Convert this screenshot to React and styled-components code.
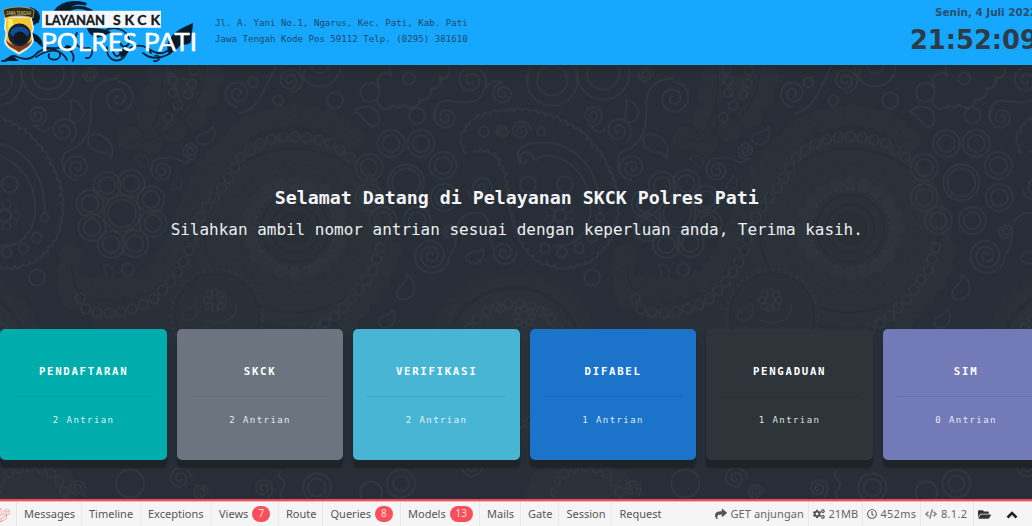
import React from "react";
import styled, { createGlobalStyle } from "styled-components";
import { FaShare, FaCogs, FaRegClock, FaCode, FaFolderOpen, FaLaravel } from "react-icons/fa";

const GlobalStyle = createGlobalStyle`
  * { box-sizing: border-box; }
  html, body { margin: 0; padding: 0; overflow: hidden; }
  body { font-family: "DejaVu Sans Mono", "Liberation Mono", monospace; }
`;

const Page = styled.div`
  width: 100vw;
  height: 100vh;
  display: flex;
  flex-direction: column;
  overflow: hidden;
  background: #272e36;
`;

const Header = styled.header`
  height: 64.5px;
  flex: none;
  display: flex;
  background: #16a7ff;
  color: #2d3c4a;
`;

const LogoArt = styled.svg`
  width: 215px;
  height: 64px;
  flex: none;
  display: block;
`;

const Address = styled.address`
  flex: 1;
  padding-top: 15px;
  font-style: normal;
  font-size: 9.14px;
  line-height: 16px;
  color: #20486a;
  white-space: pre-line;
`;

const Clock = styled.div`
  flex: none;
  width: 122px;
  font-family: "DejaVu Sans", sans-serif;
  font-weight: 700;
  white-space: nowrap;
  color: #2f3b46;
`;

const ClockDate = styled.div`
  padding: 5px 0 0 25px;
  font-size: 10.4px;
  line-height: 14px;
  color: #27506f;
`;

const ClockTime = styled.div`
  font-size: 25.7px;
  line-height: 30px;
  margin-top: 5.5px;
`;

const Hero = styled.main`
  position: relative;
  flex: 1;
  min-height: 0;
  display: flex;
  flex-direction: column;
  overflow: hidden;
`;

const Backdrop = styled.svg`
  position: absolute;
  inset: 0;
  width: 100%;
  height: 100%;
`;

const Welcome = styled.section`
  position: relative;
  height: 264.5px;
  flex: none;
  padding: 117.5px 0 0 1.5px;
  text-align: center;
  color: #f5f6f7;
  white-space: nowrap;
`;

const Title = styled.h1`
  margin: 0;
  font-size: 18.27px;
  line-height: 32px;
  font-weight: 700;
`;

const Lead = styled.p`
  margin: 0;
  font-size: 15.97px;
  line-height: 32px;
  color: #eceeef;
`;

const Cards = styled.section`
  position: relative;
  display: flex;
  gap: 9.8px;
  padding-left: 0.3px;
`;

const Card = styled.article`
  flex: none;
  width: 166.7px;
  height: 131px;
  padding: 35px 14px 0;
  border-radius: 5px;
  background: ${(p) => p.$color};
  box-shadow: 0 8px 2px rgba(29, 33, 38, 0.85);
  color: #fff;
  text-align: center;
`;

const CardTitle = styled.h2`
  margin: 0;
  font-size: 10.7px;
  line-height: 16px;
  letter-spacing: 1.7px;
`;

const Divider = styled.hr`
  margin: 16px 0 15px;
  border: 0;
  border-top: 1px solid rgba(0, 0, 0, 0.08);
`;

const Count = styled.p`
  margin: 0;
  font-size: 9px;
  line-height: 16px;
  letter-spacing: 1.42px;
  color: rgba(255, 255, 255, 0.88);
`;

const DebugBar = styled.footer`
  flex: none;
  height: 27px;
  display: flex;
  justify-content: space-between;
  border-top: 2px solid #ef4b5b;
  box-shadow: inset 0 1px 0 #f6b5bb;
  background: #f5f5f5;
  font-family: "Noto Sans", sans-serif;
  font-size: 11px;
  line-height: 26px;
  color: #555;
  white-space: nowrap;
`;

const BarGroup = styled.div`
  display: flex;
  padding-top: 1px;
`;

const BrandMark = styled.div`
  width: 16.5px;
  display: flex;
  align-items: center;
  justify-content: flex-end;
  padding: 1px 6px 0 0;
  overflow: hidden;
  color: #f0776f;
  border-right: 1px solid #e6e6e6;
  svg { flex: none; }
`;

const Tab = styled.div`
  width: ${(p) => p.$width}px;
  padding-left: 7.5px;
  display: flex;
  align-items: center;
  gap: 4px;
  border-right: 1px solid ${(p) => (p.$last ? "transparent" : "#e8e8e8")};
  svg { flex: none; color: #555; }
`;

const TabText = styled.span`
  letter-spacing: ${(p) => p.$spacing || 0}px;
`;

const Badge = styled.span`
  width: ${(p) => p.$width}px;
  height: 16px;
  flex: none;
  border-radius: 8px;
  background: #f94f5c;
  color: #ffdcdc;
  font-size: 10px;
  line-height: 15px;
  text-align: center;
`;

const Indicator = styled.div`
  width: ${(p) => p.$width}px;
  padding-left: 4px;
  display: flex;
  align-items: center;
  gap: 4px;
  color: #666;
  border-right: 1px solid ${(p) => (p.$last ? "transparent" : "#e8e8e8")};
  svg { flex: none; color: ${(p) => p.$icon || "#555"}; }
`;

/* Archimedean curl, from its centre outwards */
const curl = (cx, cy, r, turns = 2, start = 0, dir = 1) => {
  let d = "";
  const steps = 18 * turns;
  for (let i = 0; i <= steps; i++) {
    const a = start + (dir * i * Math.PI) / 9;
    const q = 1.5 + ((r - 1.5) * i) / steps;
    d += `${i ? "L" : "M"}${(cx + q * Math.cos(a)).toFixed(1)} ${(cy + q * Math.sin(a)).toFixed(1)}`;
  }
  return d;
};

/* Evenly spaced points along a polyline */
const walk = (pts, gap) => {
  const out = [pts[0]];
  let left = gap;
  for (let i = 1; i < pts.length; i++) {
    let [x, y] = pts[i - 1];
    const [ex, ey] = pts[i];
    let len = Math.hypot(ex - x, ey - y);
    while (len >= left) {
      x += ((ex - x) * left) / len;
      y += ((ey - y) * left) / len;
      out.push([x, y]);
      len = Math.hypot(ex - x, ey - y);
      left = gap;
    }
    left -= len;
  }
  return out;
};

const scallop = (pts, gap = 8) =>
  walk(pts, gap)
    .map(([x, y], i) => (i ? `A${gap * 0.55} ${gap * 0.55} 0 0 1 ${x.toFixed(1)} ${y.toFixed(1)}` : `M${x} ${y}`))
    .join("");

const ringPoints = (cx, cy, rx, ry, n) =>
  Array.from({ length: n }, (_, i) => {
    const a = (i * 2 * Math.PI) / n;
    return [cx + rx * Math.cos(a), cy + ry * Math.sin(a)];
  });

const Dots = ({ pts, r, ...rest }) => (
  <g {...rest}>
    {pts.map(([x, y], i) => (
      <circle key={i} cx={x} cy={y} r={r} />
    ))}
  </g>
);

const Blossom = ({ cx, cy, petals }) => (
  <g>
    <circle cx={cx} cy={cy} r="18" />
    <circle cx={cx} cy={cy} r="14" />
    {petals.map(([x, y], i) => (
      <g key={i}>
        <circle cx={x} cy={y} r="13.5" />
        <circle cx={x} cy={y} r="8.5" />
      </g>
    ))}
  </g>
);

const drop = (x, y, s = 1, a = 0) => ({
  d: "M-12 -3C-8 -10 6 -10 10 -3C14 6 10 12 4 10C-3 8 -3 -2 -12 -3Z",
  transform: `translate(${x} ${y}) rotate(${a}) scale(${s})`,
});

const curls = [
  [90, 75, 8, 2, 0, 1], [118, 98, 17, 2, -1.6, -1], [63, 130, 14, 2, 1, 1], [37, 115, 11, 2, 2, 1],
  [77, 167, 13, 2, 3, -1], [191, 150, 9, 2, 1, -1], [162, 170, 11, 2, 3.6, 1], [238, 93, 14, 2, 1.6, -1],
  [290, 80, 12, 2, 0, 1], [471, 80, 15, 2, 0, 1], [446, 117, 12, 2, 4, 1], [503, 93, 11, 2, 4.5, 1],
  [431, 255, 19, 3, 0, -1], [504, 252, 13, 2, 0, -1], [450, 232, 8, 2, 0, 1], [481, 187, 14, 2, 3, 1],
  [521, 130, 10, 2, 0, 1], [502, 130, 7, 2, 0, -1], [525, 159, 9, 1, 0, 1],
  [263, 488, 10, 2, 1, 1], [77, 488, 9, 2, 1, 1], [471, 465, 12, 2, 0, -1], [180, 478, 12, 2, 0, 1], [200, 492, 8, 2, 0, 1],
];

const links = [
  "M118 78C98 78 90 90 91 108C92 132 84 146 67 151C58 157 62 178 77 180",
  "M37 126C41 134 49 132 50 126",
  "M191 159C183 168 176 152 165 158C157 156 150 162 151 171",
  "M238 113C258 112 264 88 276 66",
  "M290 92C304 91 303 76 305 68",
  "M486 80C484 108 464 102 446 100C436 102 432 110 434 120",
  "M486 88C490 80 496 80 503 82",
  "M450 254C463 241 448 219 470 213C496 208 487 234 493 249",
  "M282 470C272 476 290 480 283 488C276 496 286 498 284 506",
];

const chain = [
  [80, 298], [86, 309], [102, 313], [125, 311], [150, 302], [168, 285], [180, 268], [188, 253], [195, 228],
  [205, 208], [225, 184], [240, 158], [258, 144], [276, 137], [295, 136], [314, 138], [331, 143], [351, 157],
];
const chainTail = [[380, 247], [373, 270], [355, 295], [333, 317], [310, 332]];
const fringe = [
  [70, 255], [66, 280], [72, 300], [86, 285], [110, 289], [140, 285], [160, 270], [175, 242], [190, 205], [205, 170],
  [228, 145], [250, 125], [275, 117], [300, 114], [330, 121], [352, 137], [365, 150],
];

const paisley = [
  [467, 153], [462, 138], [472, 120], [494, 112], [524, 110], [554, 117], [581, 132], [601, 155],
  [614, 183], [617, 210], [611, 237], [591, 260], [564, 267], [537, 260], [521, 240], [511, 207],
  [507, 173], [497, 153], [481, 147], [467, 153],
];

const TILE = 555.3;

const Motifs = () => (
  <g fill="none" stroke="#333941" strokeWidth="1.4">
    <g fill="#2b3139" stroke="none">
      <ellipse cx="292" cy="230" rx="100" ry="96" />
      <path d="M70 270C85 318 150 315 190 250L245 315L100 340Z" opacity=".55" />
      <Dots pts={walk(fringe, 16)} r="11" />
      <Dots pts={walk([[385, 235], [394, 255], [378, 285], [358, 310], [340, 330]], 17)} r="10" />
      <Dots pts={[[130, 138], [150, 142], [174, 130], [195, 115], [207, 95], [212, 76], [149, 118], [155, 95], [160, 75], [184, 88]]} r="12" />
      <circle cx="30" cy="498" r="48" />
      <circle cx="575" cy="498" r="48" />
      <Dots pts={ringPoints(295, 228, 47, 45, 20)} r="7" fill="#2e343c" />
    </g>
    {[0, -TILE].map((dx) => (
      <g key={dx} transform={`translate(${dx} 0)`}>
        <Dots pts={ringPoints(514, 355, 80, 80, 36)} r="7" fill="#2a3038" stroke="none" />
        <circle cx="514" cy="355" r="78" fill="#2b3139" stroke="none" />
        <circle cx="514" cy="355" r="68" stroke="#272d35" strokeWidth="4" />
        <Dots pts={ringPoints(514, 363, 55, 60, 30)} r="4.5" />
        <Dots pts={ringPoints(524, 316, 8, 8, 8)} r="3" />
        <circle cx="501" cy="308" r="4" />
        <circle cx="546" cy="312" r="4" />
      </g>
    ))}
    <g stroke="#262c34" strokeWidth="1.5">
      <ellipse cx="294" cy="230" rx="90" ry="82" />
      <circle cx="295" cy="228" r="34" />
      <circle cx="295" cy="228" r="24" />
      <circle cx="295" cy="228" r="16" fill="#292f36" />
      <circle cx="217" cy="315" r="42" fill="#293037" />
      <path d="M72 263C70 330 164 321 193 245M130 142C160 133 164 103 162 65M140 142C180 132 205 102 205 65" />
    </g>
    <g stroke="#272d35" strokeWidth="1.2">
      <Dots pts={walk(fringe, 12)} r=".7" />
      <Dots pts={ringPoints(295, 228, 67, 64, 36)} r=".8" />
      <Dots pts={ringPoints(295, 228, 58, 56, 30)} r=".6" />
    </g>
    <Dots pts={walk(chain, 12)} r="4.8" />
    <Dots pts={walk(chainTail, 12)} r="4.8" />
    <Dots pts={[[173, 80], [192, 83], [173, 92], [188, 94], [178, 105], [168, 117], [171, 69], [194, 70]]} r="4.5" />
    <g strokeWidth=".8" opacity=".8">
      <Dots pts={ringPoints(217, 315, 46, 46, 44)} r="1" />
      <Dots pts={ringPoints(295, 228, 40, 40, 42)} r="1" />
    </g>
    <g strokeWidth="1.1">
      <Dots pts={ringPoints(215, 300, 8, 8, 8)} r="3.5" />
      <path {...drop(191, 311, 0.8, 100)} />
      <path d="M205 320C225 326 237 318 236 304" />
    </g>
    {curls.map((c, i) => <path key={i} d={curl(...c)} />)}
    {links.map((d) => <path key={d} d={d} />)}
    <Blossom cx={122} cy={213} petals={[[107, 185], [131, 183], [151, 199], [153, 223], [135, 243], [111, 244], [92, 227], [90, 203]]} />
    <Blossom cx={406} cy={182} petals={[[391, 143], [421, 143], [443, 165], [444, 197], [417, 220], [383, 220], [369, 197], [369, 167]]} />
    <g>
      <circle cx="48" cy="73" r="26" /><circle cx="48" cy="73" r="16" />
      <circle cx="-3" cy="80" r="25" /><circle cx="-3" cy="80" r="15" />
      <circle cx="552" cy="80" r="25" /><circle cx="552" cy="80" r="15" />
      <circle cx="320" cy="66" r="20" /><circle cx="320" cy="64" r="9" />
      <circle cx="253" cy="82" r="5" /><circle cx="278" cy="100" r="5" />
      <circle cx="335" cy="100" r="8" /><circle cx="417" cy="115" r="8" />
      <circle cx="370" cy="92" r="9.5" /><circle cx="409" cy="78" r="6" />
      <circle cx="37" cy="277" r="8" /><circle cx="128" cy="269" r="6" /><path {...drop(108, 270, 0.6, 30)} />
      <circle cx="317" cy="487" r="14" /><circle cx="317" cy="487" r="9" />
      <circle cx="401" cy="483" r="14" /><circle cx="401" cy="483" r="8" />
      <circle cx="371" cy="492" r="11" /><circle cx="130" cy="483" r="14" />
    </g>
    <path strokeWidth="1.7" d="M448 66A7 7 0 0 1 440 77A8 8 0 0 1 431 88A9 9 0 0 1 420 99A9 9 0 0 1 404 104A8 8 0 0 1 393 105A9 9 0 0 1 377 99M380 87A8 8 0 0 1 392 75A11 11 0 0 1 394 60" />
    {[0, -TILE].map((dx) => (
      <g key={dx} transform={`translate(${dx} 0)`}>
        <path d={scallop(paisley)} />
        <path d="M520 164C511 146 529 141 546 142C583 145 601 177 600 213" />
        <circle cx="600" cy="217" r="4" />
        <path d="M536 160C550 146 581 164 588 190C597 224 580 249 553 245" />
        <circle cx="565" cy="184" r="8" /><circle cx="528" cy="184" r="8" />
        <circle cx="484" cy="131" r="5" /><circle cx="541" cy="131" r="4" />
        <Dots pts={ringPoints(560, 215, 11, 11, 9)} r="4" strokeWidth="1" opacity=".7" />
        <circle cx="560" cy="215" r="6" />
        <Dots pts={[[545, 248], [562, 252], [579, 248], [592, 237]]} r="5" />
      </g>
    ))}
    <path {...drop(75, 110, 0.9, 50)} />
    <path d="M88 140C88 132 98 132 105 137C111 141 115 149 111 158C109 149 102 154 95 150C90 147 87 144 88 140Z" />
    <path {...drop(207, 135, 0.85, 110)} />
    <path {...drop(367, 115, 1.05, 0)} />
    <path {...drop(406, 287, 1, 80)} />
    <path {...drop(476, 255, 0.8, 120)} />
    <path {...drop(388, 318, 0.8, 100)} />
    <path {...drop(141, 160, 0.6, 0)} />
    <path {...drop(177, 182, 0.6, 80)} />
    <Dots pts={ringPoints(30, 502, 36, 36, 20)} r="4.5" />
    <Dots pts={ringPoints(584, 502, 30, 36, 20)} r="4.5" />
  </g>
);

const PaisleyBackdrop = () => (
  <Backdrop viewBox="0 64.5 1032 434.5" preserveAspectRatio="none" aria-hidden="true">
    <defs>
      <pattern id="paisley" x="0" y="0" width={TILE} height="560" patternUnits="userSpaceOnUse">
        <Motifs />
      </pattern>
      <linearGradient id="edge" x1="0" y1="0" x2="0" y2="1">
        <stop offset="0" stopColor="#20252b" />
        <stop offset="1" stopColor="#20252b" stopOpacity="0" />
      </linearGradient>
    </defs>
    <rect y="64" width="1032" height="436" fill="#272e37" />
    <rect y="64" width="1032" height="436" fill="url(#paisley)" />
    <rect y="64" width="1032" height="12" fill="url(#edge)" opacity=".6" />
  </Backdrop>
);

const Logo = () => (
  <LogoArt viewBox="0 0 215 64" role="img" aria-label="Layanan SKCK Polres Pati">
    <g fill="none" stroke="#0b2238" strokeLinecap="round">
      <path strokeWidth="3.2" d="M33 24C41 20 40 12 31 9M55 12C61 3 72 1 85 4M66 12C75 5 84 7 91 11" />
      <path strokeWidth="1.8" d="M2 61C12 62 9 55 15 56C21 59 28 61 34 56C44 44 62 49 60 56C58 62 46 60 49 54M36 39C39 46 47 49 57 48C67 46 76 52 73 61M36 57C49 48 61 48 67 60" />
      <path strokeWidth="1.8" d="M105 31C112 25 127 29 129 39C130 48 121 49 120 42M107 47C106 63 122 64 126 54C130 43 147 43 151 53M113 51C115 60 122 55 120 51M77 33C72 43 78 50 89 48C95 51 91 59 86 58" />
      <path strokeWidth="1.8" d="M143 53C153 62 171 57 174 47C178 38 188 36 192 26M149 49C160 57 169 53 174 43M154 61C161 62 160 54 155 56" />
    </g>
    <g fill="#071b2c">
      <path d="M57 13C60 4 77 -2 87 4C75 3 70 7 68 13ZM87 28C97 28 108 29 112 33C106 33 102 39 95 37C90 35 88 32 87 28ZM167 46C170 33 181 28 193 23L191 42C187 47 181 42 178 48L169 55Z" />
      <path d="M31 11C38 13 40 18 39 23L32 21ZM32 33C38 34 42 39 43 45L34 41ZM66 45C71 45 74 48 72 52L64 49ZM119 51C123 47 129 49 127 54L121 58Z" />
      <path d="M2 61L12 55L19 61Z" />
    </g>
    <rect x="42" y="10.8" width="119" height="17" fill="#f4f8fb" />
    <g fontFamily="Lato, sans-serif">
      <text x="45" y="24.6" fontSize="14" fontWeight="700" fill="#16191d" stroke="#16191d" strokeWidth=".35" textLength="60" lengthAdjust="spacingAndGlyphs">LAYANAN</text>
      <text x="113" y="24.6" fontSize="14" fontWeight="700" fill="#16191d" stroke="#16191d" strokeWidth=".35" textLength="47">SKCK</text>
      <text x="41" y="50.8" fontSize="25.5" fontWeight="400" fill="#fff" stroke="#fff" strokeWidth=".5" textLength="156" lengthAdjust="spacingAndGlyphs">POLRES PATI</text>
    </g>
    <path d="M5 17L31 17C31 23 34 25 33 30C30 33 33 36 33 41C30 49 24 50 19 54C14 50 7 49 5 42C5 37 8 34 5 29C4 25 7 22 5 17Z" fill="#f3c72e" stroke="#e9edf0" strokeWidth="1.6" />
    <path d="M6 40C8 48 14 48 19 52C24 48 30 48 32 40C27 46 13 48 6 40Z" fill="#7b3a26" />
    <path d="M8 19H13V38C10 38 8 32 8 19Z" fill="#fae85e" />
    <circle cx="19.5" cy="34.8" r="11.4" fill="#16213a" />
    <path d="M9.5 33A11 11 0 0 1 29.5 33C25 40 14 40 9.5 33Z" fill="#124d92" />
    <circle cx="20" cy="38" r="6.5" fill="#131722" />
    <path d="M3 10C11 6 26 6 34 10L33 18C24 15 13 15 5 18Z" fill="#242b29" stroke="#d9953c" strokeWidth=".8" />
    <text x="6" y="14.7" fontFamily="Liberation Sans, sans-serif" fontSize="4.5" fontWeight="700" fill="#d3b54c" textLength="25" lengthAdjust="spacingAndGlyphs">JAWA TENGAH</text>
  </LogoArt>
);

const queues = [
  { name: "PENDAFTARAN", count: 2, color: "#00adad" },
  { name: "SKCK", count: 2, color: "#6c757f" },
  { name: "VERIFIKASI", count: 2, color: "#48b5d5" },
  { name: "DIFABEL", count: 1, color: "#1b74c9" },
  { name: "PENGADUAN", count: 1, color: "#2d343a" },
  { name: "SIM", count: 0, color: "#727ab8" },
];

const tabs = [
  { label: "Messages", width: 65 },
  { label: "Timeline", width: 59 },
  { label: "Exceptions", width: 71 },
  { label: "Views", width: 67, badge: 7, badgeWidth: 18 },
  { label: "Route", width: 44.5 },
  { label: "Queries", width: 77.5, badge: 8, badgeWidth: 18 },
  { label: "Models", width: 79, badge: 13, badgeWidth: 23 },
  { label: "Mails", width: 41 },
  { label: "Gate", width: 38.5 },
  { label: "Session", width: 53 },
  { label: "Request", width: 60 },
];

export default function App() {
  return (
    <Page>
      <GlobalStyle />
      <Header>
        <Logo />
        <Address>{"Jl. A. Yani No.1, Ngarus, Kec. Pati, Kab. Pati\nJawa Tengah Kode Pos 59112 Telp. (0295) 381610"}</Address>
        <Clock>
          <ClockDate>Senin, 4 Juli 2022</ClockDate>
          <ClockTime>21:52:09</ClockTime>
        </Clock>
      </Header>
      <Hero>
        <PaisleyBackdrop />
        <Welcome>
          <Title>Selamat Datang di Pelayanan SKCK Polres Pati</Title>
          <Lead>Silahkan ambil nomor antrian sesuai dengan keperluan anda, Terima kasih.</Lead>
        </Welcome>
        <Cards>
          {queues.map((q) => (
            <Card key={q.name} $color={q.color}>
              <CardTitle>{q.name}</CardTitle>
              <Divider />
              <Count>{q.count} Antrian</Count>
            </Card>
          ))}
        </Cards>
      </Hero>
      <DebugBar>
        <BarGroup>
          <BrandMark><FaLaravel size={15} /></BrandMark>
          {tabs.map((t, i) => (
            <Tab key={t.label} $width={t.width} $last={i === tabs.length - 1}>
              <TabText>{t.label}</TabText>
              {t.badge !== undefined && <Badge $width={t.badgeWidth}>{t.badge}</Badge>}
            </Tab>
          ))}
        </BarGroup>
        <BarGroup>
          <Indicator $width={98}><FaShare size={12} /><TabText $spacing={0.1}>GET anjungan</TabText></Indicator>
          <Indicator $width={54}><FaCogs size={12} /><TabText>21MB</TabText></Indicator>
          <Indicator $width={58.5}><FaRegClock size={10} /><TabText $spacing={0.25}>452ms</TabText></Indicator>
          <Indicator $width={53} $icon="#888"><FaCode size={12} /><TabText $spacing={0.3}>8.1.2</TabText></Indicator>
          <Indicator $width={28} $icon="#333" $last><FaFolderOpen size={13} /></Indicator>
          <Indicator $width={30} $icon="#222" $last>
            <svg width="12" height="9" viewBox="0 0 12 9"><path d="M1.5 7.5L6 3L10.5 7.5" fill="none" stroke="currentColor" strokeWidth="2.6" /></svg>
          </Indicator>
        </BarGroup>
      </DebugBar>
    </Page>
  );
}
